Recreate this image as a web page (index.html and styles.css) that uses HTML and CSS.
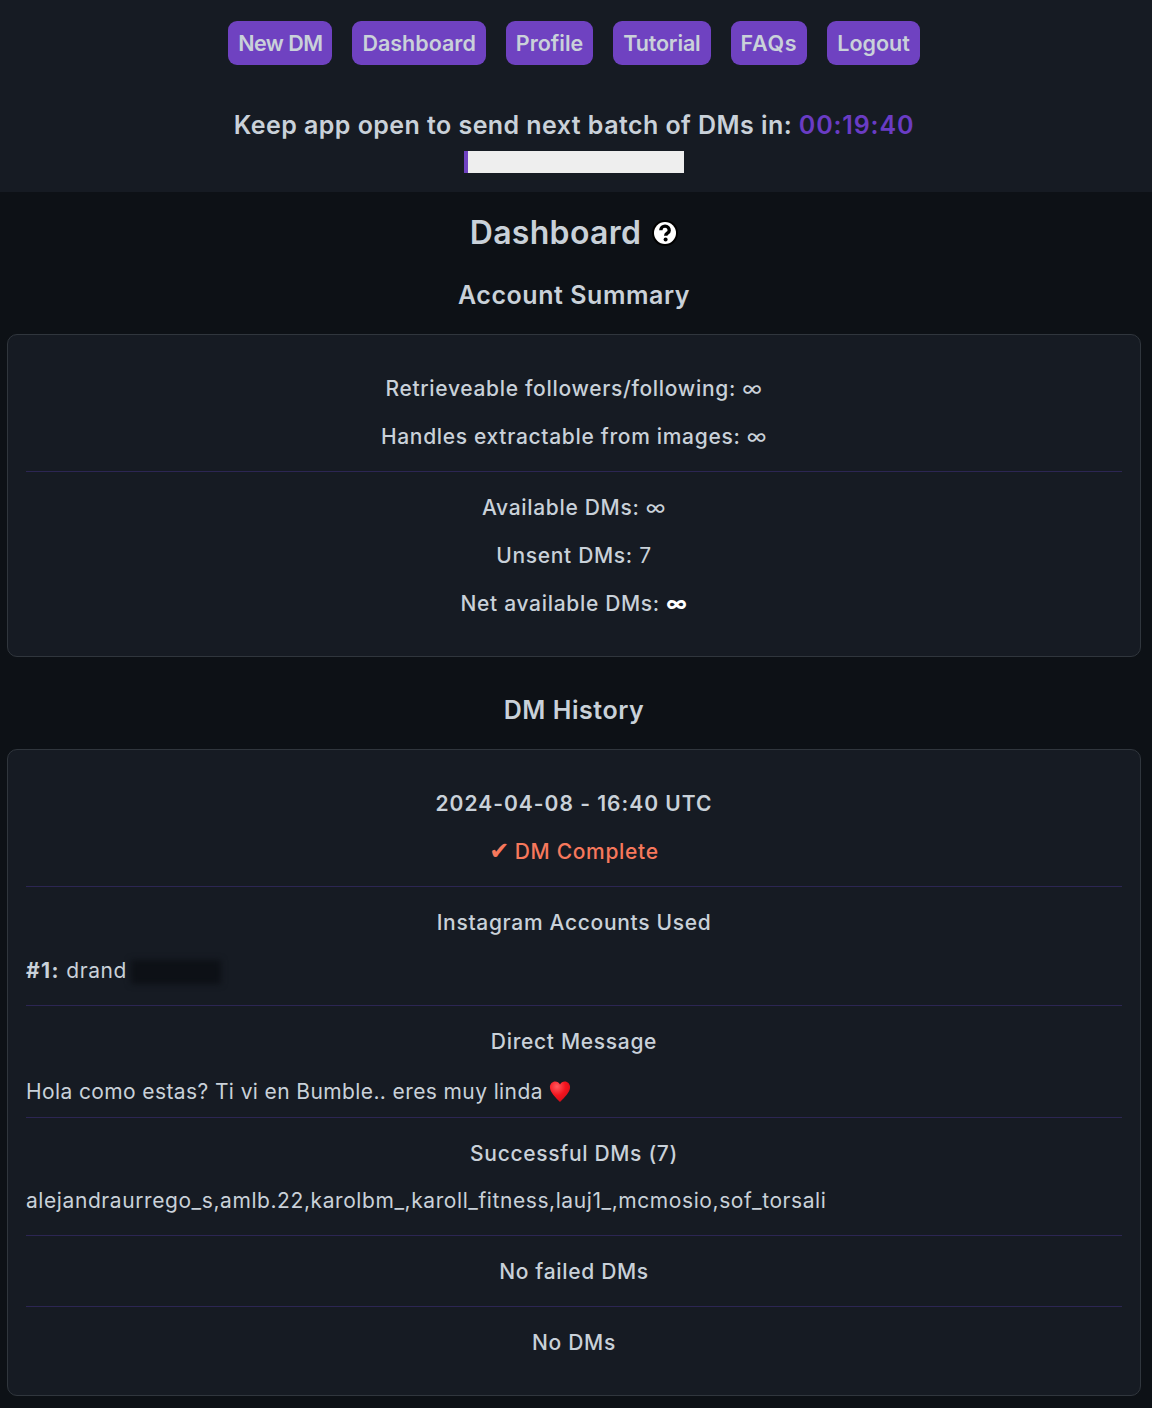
FILE: index.html
```html
<!DOCTYPE html>
<html lang="en">
<head>
<meta charset="utf-8">
<title>Dashboard</title>
<link rel="stylesheet" href="styles.css">
</head>
<body>
<header class="top">
  <nav class="nav">
    <a class="btn btn-tight">New DM</a>
    <a class="btn">Dashboard</a>
    <a class="btn">Profile</a>
    <a class="btn btn-snug">Tutorial</a>
    <a class="btn btn-wide">FAQs</a>
    <a class="btn">Logout</a>
  </nav>
  <p class="timer">Keep app open to send next batch of DMs in: <span class="time">00:19:40</span></p>
  <div class="progress"><div class="progress-fill"></div></div>
</header>
<main class="main">
  <h1 class="title">Dashboard
    <svg class="help" viewBox="0 0 26 26" aria-hidden="true"><circle cx="13" cy="13" r="13" fill="#000"/><circle cx="13" cy="13" r="11" fill="#fff"/><path d="M8.800 10.200a4.200 4.200 0 0 1 8.400.2c0 2.800-3.500 2.800-3.500 5.300" fill="none" stroke="#000" stroke-width="3.400"/><circle cx="13.600" cy="19.600" r="2" fill="#000"/></svg>
  </h1>
  <h2 class="section">Account Summary</h2>
  <section class="card summary">
    <p class="row">Retrieveable followers/following: <span class="val">∞</span></p>
    <p class="row">Handles extractable from images: <span class="val">∞</span></p>
    <hr class="rule">
    <p class="row">Available DMs: <span class="val">∞</span></p>
    <p class="row">Unsent DMs: <span class="val">7</span></p>
    <p class="row">Net available DMs: <b class="white">∞</b></p>
  </section>
  <h2 class="section history">DM History</h2>
  <section class="card log">
    <p class="row date">2024-04-08 - 16:40 UTC</p>
    <p class="row done"><span class="check">✔</span> DM Complete</p>
    <hr class="rule">
    <p class="row">Instagram Accounts Used</p>
    <p class="row left"><b class="num">#1:</b> drand<span class="redact"></span></p>
    <hr class="rule">
    <p class="row">Direct Message</p>
    <p class="row left msg">Hola como estas? Ti vi en Bumble.. eres muy linda
      <svg class="heart" viewBox="0 0 24 24" aria-hidden="true"><defs><radialGradient id="hg" cx="35%" cy="25%" r="85%"><stop offset="0" stop-color="#ff5a5f"/><stop offset=".5" stop-color="#f5141e"/><stop offset="1" stop-color="#c90d18"/></radialGradient></defs><path d="M12 23.500C7 18.500 1 13 1 7.200 1 3.600 3.700 1 6.800 1 9 1 11 2.200 12 4.300 13 2.200 15 1 17.200 1 20.300 1 23 3.600 23 7.200 23 13 17 18.500 12 23.500Z" fill="url(#hg)"/></svg>
    </p>
    <hr class="rule">
    <p class="row">Successful DMs (7)</p>
    <p class="row left users">alejandraurrego_s,amlb.22,karolbm_,karoll_fitness,lauj1_,mcmosio,sof_torsali</p>
    <hr class="rule">
    <p class="row">No failed DMs</p>
    <hr class="rule">
    <p class="row">No DMs</p>
  </section>
</main>
</body>
</html>
```

FILE: styles.css
```css
* { box-sizing: border-box; }
html, body { margin: 0; padding: 0; }
body {
  width: 1152px;
  min-height: 1408px;
  background: #0d1116;
  color: #c9d1d9;
  font-family: Inter, "Noto Sans", sans-serif;
  font-size: 21px;
  font-weight: 500;
}
.top {
  height: 192px;
  padding: 21px 4px 0 0;
  background: #161b23;
  text-align: center;
}
.nav { display: flex; justify-content: center; gap: 20px; }
.btn {
  height: 44px;
  padding: 0 10px;
  display: flex;
  align-items: center;
  background: #6f42c1;
  border-radius: 9px;
  font-size: 21.5px;
  font-weight: 600;
  color: #c9d1d9;
}
.btn-tight { letter-spacing: -.55px; }
.btn-snug { letter-spacing: -.17px; }
.btn-wide { letter-spacing: .7px; }
.timer { margin: 43px 0 0; font-size: 25px; font-weight: 600; line-height: 34px; letter-spacing: .44px; }
.time { color: #6a3cc4; letter-spacing: .85px; }
.progress { width: 220px; height: 22px; margin: 9px auto 0; background: #eeeeee; }
.progress-fill { width: 4px; height: 100%; background: #6f42c1; }
.main { padding: 0 11px 0 7px; text-align: center; }
.title {
  margin: 0;
  padding-top: 2px;
  height: 80px;
  font-size: 32px;
  letter-spacing: .3px;
  line-height: 42px;
  font-weight: 600;
  display: flex;
  justify-content: center;
  align-items: center;
  gap: 11px;
}
.help { width: 26px; height: 26px; }
.section { margin: 0; font-size: 25px; font-weight: 600; line-height: 34px; letter-spacing: .55px; height: 62px; padding-top: 6px; }
.history { height: 92px; padding-top: 36px; }
.card {
  background: #161b23;
  border: 1px solid #30363d;
  border-radius: 10px;
  padding: 30px 18px 0;
}
.summary { height: 323px; }
.log { height: 647px; }
.row { margin: 0; height: 48px; line-height: 48px; letter-spacing: .68px; }
.rule { margin: 10px 0 12px; border: 0; border-top: 1px solid #2c2653; }
.left { text-align: left; font-weight: 400; letter-spacing: .55px; }
.msg { height: 41px; padding-top: 2px; letter-spacing: .39px; }
.users { height: 47px; line-height: 46px; letter-spacing: .58px; }
.val { font-weight: 400; }
.white { color: #fff; }
.num { font-weight: 700; letter-spacing: 1.4px; }
.date { font-weight: 600; letter-spacing: 1px; }
.done { color: #f6785c; }
.check { font-family: "DejaVu Sans", sans-serif; font-size: 24px; letter-spacing: 0; line-height: 24px; margin-right: -1px; }
.heart { width: 22px; height: 23px; vertical-align: -4px; }
.redact {
  display: inline-block;
  width: 90px;
  height: 24px;
  margin-left: 4px;
  vertical-align: -6px;
  background: #0d1016;
  filter: blur(3px);
}
```
